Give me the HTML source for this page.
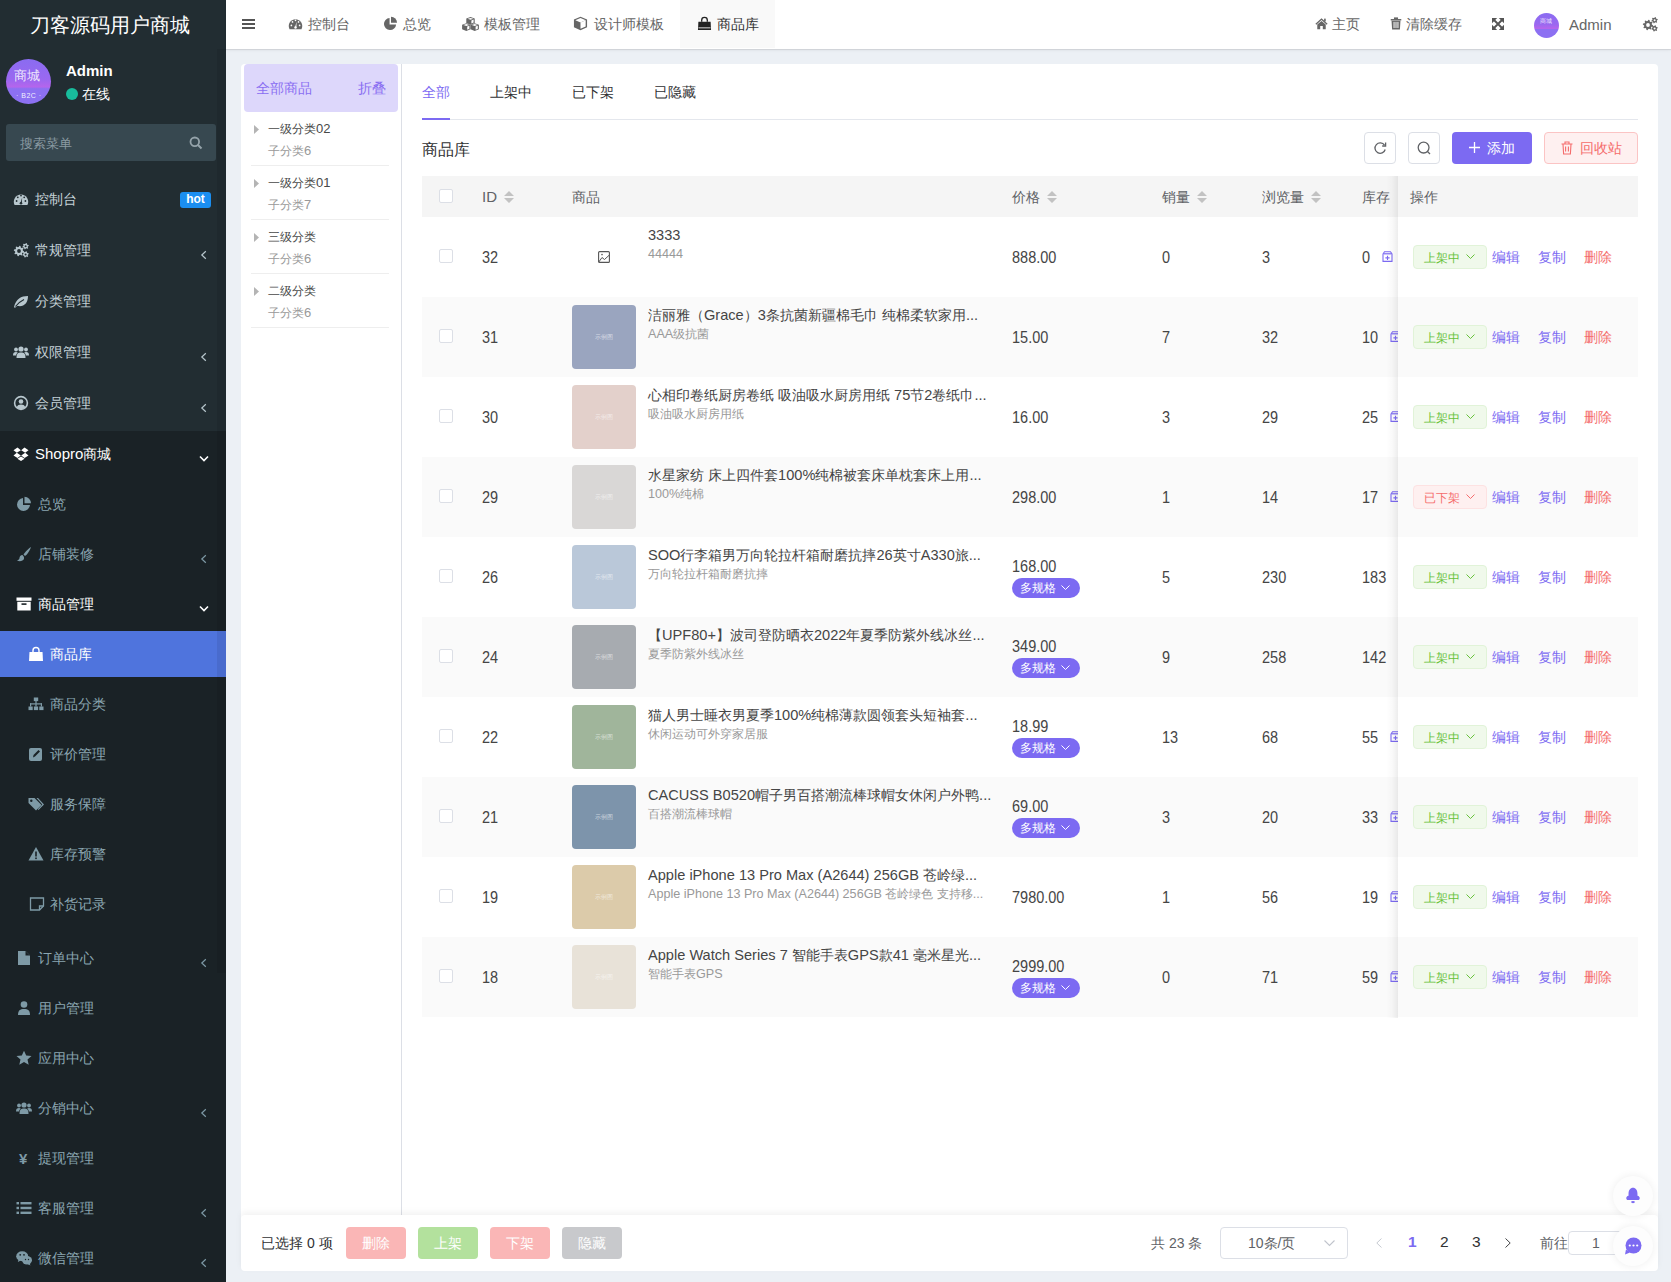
<!DOCTYPE html><html><head><meta charset="utf-8"><style>
*{box-sizing:border-box;margin:0;padding:0}
html,body{width:1671px;height:1282px;overflow:hidden}
body{position:relative;background:#ecf0f5;font-family:"Liberation Sans",sans-serif;font-size:14px;color:#333}
.a{position:absolute;white-space:nowrap}
svg{display:block;position:absolute}
#sb{position:absolute;left:0;top:0;width:226px;height:1282px;background:#222d32;overflow:hidden}
#hd{position:absolute;left:226px;top:0;width:1445px;height:49px;background:#fff;box-shadow:0 1px 1px rgba(0,0,0,0.09),0 2px 3px rgba(0,0,0,0.03)}
#card{position:absolute;left:241px;top:64px;width:1417px;height:1180px;background:#fff;border-radius:4px;overflow:hidden}
#bar{position:absolute;left:241px;top:1215px;width:1417px;height:56px;background:#fff;border-radius:4px;box-shadow:0 -3px 6px rgba(0,0,0,0.05)}
</style></head><body>
<div id="sb">
<div class="a" style="left:0px;top:431px;width:226px;height:851px;background:#1a2226;"></div>
<div class="a" style="left:30px;top:13.0px;font-size:20px;line-height:24px;color:#fff;font-weight:normal;">刀客源码用户商城</div>
<div class="a" style="left:6px;top:59px;width:45px;height:45px;border-radius:50%;overflow:hidden;background:linear-gradient(180deg,#8a6cf1 0%,#9a68f0 45%,#b565ec 62%,#8c70f2 66%,#8c70f2 100%)"></div>
<div class="a" style="left:14px;top:66.5px;font-size:13px;line-height:17px;color:rgba(255,255,255,0.85);font-weight:normal;">商城</div>
<div class="a" style="left:16px;top:89.5px;font-size:7px;line-height:11px;color:rgba(255,255,255,0.9);font-weight:normal;letter-spacing:0.5px">· B2C ·</div>
<div class="a" style="left:66px;top:61.0px;font-size:15px;line-height:19px;color:#fff;font-weight:bold;">Admin</div>
<div class="a" style="left:66px;top:88px;width:12px;height:12px;border-radius:50%;background:#18bc9c"></div>
<div class="a" style="left:82px;top:85.0px;font-size:14px;line-height:18px;color:#fff;font-weight:normal;">在线</div>
<div class="a" style="left:6px;top:124px;width:210px;height:37px;background:#374850;border-radius:3px"></div>
<div class="a" style="left:20px;top:134.5px;font-size:13px;line-height:17px;color:#8a9aa2;font-weight:normal;">搜索菜单</div>
<svg style="left:189px;top:136px;" width="14" height="14" viewBox="0 0 14 14"><circle cx="5.8" cy="5.8" r="4.3" stroke="#95a3aa" stroke-width="1.8" fill="none"/><path d="M9 9 L12.5 12.5" stroke="#95a3aa" stroke-width="2"/></svg>
<div class="a" style="left:0px;top:631px;width:226px;height:46px;background:#4f74dd;"></div>
<svg style="left:13px;top:191px;" width="16" height="16" viewBox="0 0 16 16"><path d="M1.6 14 A7.2 7.2 0 1 1 14.4 14 Z" fill="#b8c7ce"/><g fill="#222d32"><circle cx="3.6" cy="10" r="0.9"/><circle cx="4.8" cy="6.3" r="0.9"/><circle cx="8" cy="4.6" r="0.9"/><circle cx="11.2" cy="6.3" r="0.9"/><circle cx="12.4" cy="10" r="0.9"/><path d="M7.3 12.5 L9.2 6.2 L8.8 12.7Z"/><circle cx="8" cy="12.3" r="1.3"/></g></svg>
<div class="a" style="left:35px;top:190.0px;font-size:14px;line-height:18px;color:#c4d1d7;font-weight:normal;">控制台</div>
<svg style="left:13px;top:242px;" width="16" height="16" viewBox="0 0 16 16"><g fill="#b8c7ce"><path d="M6.51 3.83 L7.51 4.02 L7.84 5.56 L8.47 5.99 L10.02 5.70 L10.59 6.55 L9.73 7.87 L9.88 8.62 L11.17 9.51 L10.98 10.51 L9.44 10.84 L9.01 11.47 L9.30 13.02 L8.45 13.59 L7.13 12.73 L6.38 12.88 L5.49 14.17 L4.49 13.98 L4.16 12.44 L3.53 12.01 L1.98 12.30 L1.41 11.45 L2.27 10.13 L2.12 9.38 L0.83 8.49 L1.02 7.49 L2.56 7.16 L2.99 6.53 L2.70 4.98 L3.55 4.41 L4.87 5.27 L5.62 5.12Z"/><path d="M13.02 1.03 L13.82 1.24 L14.00 2.38 L14.42 2.80 L15.56 2.98 L15.77 3.78 L14.88 4.50 L14.72 5.08 L15.14 6.15 L14.55 6.74 L13.48 6.32 L12.90 6.48 L12.18 7.37 L11.38 7.16 L11.20 6.02 L10.78 5.60 L9.64 5.42 L9.43 4.62 L10.32 3.90 L10.48 3.32 L10.06 2.25 L10.65 1.66 L11.72 2.08 L12.30 1.92Z"/><path d="M13.02 9.23 L13.82 9.44 L14.00 10.58 L14.42 11.00 L15.56 11.18 L15.77 11.98 L14.88 12.70 L14.72 13.28 L15.14 14.35 L14.55 14.94 L13.48 14.52 L12.90 14.68 L12.18 15.57 L11.38 15.36 L11.20 14.22 L10.78 13.80 L9.64 13.62 L9.43 12.82 L10.32 12.10 L10.48 11.52 L10.06 10.45 L10.65 9.86 L11.72 10.28 L12.30 10.12Z"/></g><g fill="#222d32"><circle cx="6" cy="9" r="1.9"/><circle cx="12.6" cy="4.2" r="1"/><circle cx="12.6" cy="12.4" r="1"/></g></svg>
<div class="a" style="left:35px;top:241.0px;font-size:14px;line-height:18px;color:#c4d1d7;font-weight:normal;">常规管理</div>
<svg style="left:200px;top:250px;" width="8" height="10" viewBox="0 0 8 10"><path d="M5.8 1.2 L1.8 5 L5.8 8.8" stroke="#b8c7ce" stroke-width="1.2" fill="none"/></svg>
<svg style="left:13px;top:293px;" width="16" height="16" viewBox="0 0 16 16"><path d="M1 14 C3 6 8 3 15 3 C15 10 11 14 5 13 C4 13 3 13.5 2 15 Z" fill="#b8c7ce"/><path d="M2.5 13.5 C5 10 8 8 11 6.5" stroke="#222d32" stroke-width="1.2" fill="none"/></svg>
<div class="a" style="left:35px;top:292.0px;font-size:14px;line-height:18px;color:#c4d1d7;font-weight:normal;">分类管理</div>
<svg style="left:13px;top:344px;" width="16" height="16" viewBox="0 0 16 16"><g fill="#b8c7ce"><circle cx="8" cy="5" r="2.6"/><path d="M3.5 14 C3.5 9.5 5 8.5 8 8.5 C11 8.5 12.5 9.5 12.5 14Z"/><circle cx="3" cy="5.5" r="1.9"/><circle cx="13" cy="5.5" r="1.9"/><path d="M0 11.5 C0 8.8 1 8 3 8 C3.8 8 4.5 8.2 4.8 8.6 C3.6 9.5 3.2 10.5 3.2 11.5Z"/><path d="M16 11.5 C16 8.8 15 8 13 8 C12.2 8 11.5 8.2 11.2 8.6 C12.4 9.5 12.8 10.5 12.8 11.5Z"/></g></svg>
<div class="a" style="left:35px;top:343.0px;font-size:14px;line-height:18px;color:#c4d1d7;font-weight:normal;">权限管理</div>
<svg style="left:200px;top:352px;" width="8" height="10" viewBox="0 0 8 10"><path d="M5.8 1.2 L1.8 5 L5.8 8.8" stroke="#b8c7ce" stroke-width="1.2" fill="none"/></svg>
<svg style="left:13px;top:395px;" width="16" height="16" viewBox="0 0 16 16"><circle cx="8" cy="8" r="7.2" fill="#b8c7ce"/><circle cx="8" cy="8" r="5.6" fill="#222d32"/><circle cx="8" cy="6.5" r="2.3" fill="#b8c7ce"/><path d="M3.6 12.6 C4.5 10.2 6 9.6 8 9.6 C10 9.6 11.5 10.2 12.4 12.6 C11 13.8 9.6 14.2 8 14.2 C6.4 14.2 5 13.8 3.6 12.6Z" fill="#b8c7ce"/></svg>
<div class="a" style="left:35px;top:394.0px;font-size:14px;line-height:18px;color:#c4d1d7;font-weight:normal;">会员管理</div>
<svg style="left:200px;top:403px;" width="8" height="10" viewBox="0 0 8 10"><path d="M5.8 1.2 L1.8 5 L5.8 8.8" stroke="#b8c7ce" stroke-width="1.2" fill="none"/></svg>
<svg style="left:13px;top:446px;" width="16" height="16" viewBox="0 0 16 16"><g fill="#fff"><path d="M4.5 1.5 L0.5 4.2 L3.8 6.8 L7.8 4.3Z"/><path d="M11.5 1.5 L15.5 4.2 L12.2 6.8 L8.2 4.3Z"/><path d="M3.8 6.8 L0.5 9.4 L4.5 12 L7.8 9.5Z"/><path d="M12.2 6.8 L15.5 9.4 L11.5 12 L8.2 9.5Z"/><path d="M4.4 12.8 L8 10.5 L11.6 12.8 L8 15Z"/></g></svg>
<div class="a" style="left:35px;top:445.0px;font-size:14px;line-height:18px;color:#fff;font-weight:normal;"><span style="font-size:15px">Shopro</span>商城</div>
<svg style="left:199px;top:454px;" width="10" height="9" viewBox="0 0 10 9"><path d="M1 2.5 L5 6.5 L9 2.5" stroke="#fff" stroke-width="1.6" fill="none"/></svg>
<svg style="left:16px;top:496px;" width="16" height="16" viewBox="0 0 16 16"><path d="M7 2 A6.5 6.5 0 1 0 14 9 L7 9Z" fill="#7e9aa6"/><path d="M8.5 0.8 A6.5 6.5 0 0 1 15 7.3 L8.5 7.3Z" fill="#7e9aa6"/></svg>
<div class="a" style="left:38px;top:494.5px;font-size:14px;line-height:18px;color:#8ba6b1;font-weight:normal;">总览</div>
<svg style="left:16px;top:546px;" width="16" height="16" viewBox="0 0 16 16"><path d="M15 1 C13 2 9 6 7.5 8.5 L9 10 C11.5 8.5 14 4 15 1Z" fill="#7e9aa6"/><path d="M6.5 9 C4.5 9 3.5 10.5 3.5 12 C3.5 13.2 2.5 14 1 14.5 C3 15.5 6 15.5 7.5 13.8 C8.5 12.6 8.3 10.5 6.5 9Z" fill="#7e9aa6"/></svg>
<div class="a" style="left:38px;top:545.0px;font-size:14px;line-height:18px;color:#8ba6b1;font-weight:normal;">店铺装修</div>
<svg style="left:200px;top:554px;" width="8" height="10" viewBox="0 0 8 10"><path d="M5.8 1.2 L1.8 5 L5.8 8.8" stroke="#7e9aa6" stroke-width="1.2" fill="none"/></svg>
<svg style="left:16px;top:596px;" width="16" height="16" viewBox="0 0 16 16"><rect x="0.5" y="1.5" width="15" height="3.3" fill="#fff"/><rect x="1.3" y="5.8" width="13.4" height="8.7" fill="#fff"/><rect x="5.5" y="7.3" width="5" height="1.6" fill="#1a2226"/></svg>
<div class="a" style="left:38px;top:595.0px;font-size:14px;line-height:18px;color:#fff;font-weight:normal;">商品管理</div>
<svg style="left:199px;top:604px;" width="10" height="9" viewBox="0 0 10 9"><path d="M1 2.5 L5 6.5 L9 2.5" stroke="#fff" stroke-width="1.6" fill="none"/></svg>
<svg style="left:28px;top:646px;" width="16" height="16" viewBox="0 0 16 16"><path d="M5 6 V4.5 A3 3 0 0 1 11 4.5 V6" stroke="#fff" stroke-width="1.4" fill="none"/><path d="M1.5 6 H14.5 L15 15 H1Z" fill="#fff"/></svg>
<div class="a" style="left:50px;top:645.0px;font-size:14px;line-height:18px;color:#fff;font-weight:normal;">商品库</div>
<svg style="left:28px;top:696px;" width="16" height="16" viewBox="0 0 16 16"><g fill="#7e9aa6"><rect x="5.8" y="1.5" width="4.4" height="3.6"/><rect x="0.5" y="10.5" width="4.2" height="3.6"/><rect x="5.9" y="10.5" width="4.2" height="3.6"/><rect x="11.3" y="10.5" width="4.2" height="3.6"/><rect x="7.4" y="5" width="1.2" height="5.6"/><rect x="2" y="7.3" width="12" height="1.2"/><rect x="2" y="7.3" width="1.2" height="3.3"/><rect x="12.8" y="7.3" width="1.2" height="3.3"/></g></svg>
<div class="a" style="left:50px;top:695.0px;font-size:14px;line-height:18px;color:#8ba6b1;font-weight:normal;">商品分类</div>
<svg style="left:28px;top:746px;" width="16" height="16" viewBox="0 0 16 16"><rect x="1" y="2" width="13" height="13" rx="2" fill="#7e9aa6"/><path d="M5 11.5 L5.5 9 L10.5 4 L12 5.5 L7 10.5Z" fill="#1a2226"/></svg>
<div class="a" style="left:50px;top:745.0px;font-size:14px;line-height:18px;color:#8ba6b1;font-weight:normal;">评价管理</div>
<svg style="left:28px;top:796px;" width="16" height="16" viewBox="0 0 16 16"><path d="M0.5 2 H6.5 L13.5 9 L8 14.5 L0.5 7Z" fill="#7e9aa6"/><circle cx="3.3" cy="4.8" r="1.2" fill="#1a2226"/><path d="M8.5 2 H10 L16 8.5 L10.5 14 L9.8 13.3 L14.3 8.5Z" fill="#7e9aa6"/></svg>
<div class="a" style="left:50px;top:795.0px;font-size:14px;line-height:18px;color:#8ba6b1;font-weight:normal;">服务保障</div>
<svg style="left:28px;top:846px;" width="16" height="16" viewBox="0 0 16 16"><path d="M8 1 L15.5 14.5 H0.5Z" fill="#7e9aa6"/><rect x="7.2" y="5.5" width="1.6" height="5" fill="#1a2226"/><rect x="7.2" y="11.5" width="1.6" height="1.6" fill="#1a2226"/></svg>
<div class="a" style="left:50px;top:845.0px;font-size:14px;line-height:18px;color:#8ba6b1;font-weight:normal;">库存预警</div>
<svg style="left:29px;top:896px;" width="16" height="16" viewBox="0 0 16 16"><path d="M1.5 2 H14.5 V10 L10.5 14 H1.5Z" stroke="#7e9aa6" stroke-width="1.3" fill="none"/><path d="M10.5 14 V10 H14.5" stroke="#7e9aa6" stroke-width="1.3" fill="none"/></svg>
<div class="a" style="left:50px;top:895.0px;font-size:14px;line-height:18px;color:#8ba6b1;font-weight:normal;">补货记录</div>
<svg style="left:16px;top:950px;" width="16" height="16" viewBox="0 0 16 16"><path d="M2 1 H9.5 L14 5.5 V15 H2Z" fill="#7e9aa6"/><path d="M9.5 1 V5.5 H14" fill="#1a2226"/></svg>
<div class="a" style="left:38px;top:949.0px;font-size:14px;line-height:18px;color:#8ba6b1;font-weight:normal;">订单中心</div>
<svg style="left:200px;top:958px;" width="8" height="10" viewBox="0 0 8 10"><path d="M5.8 1.2 L1.8 5 L5.8 8.8" stroke="#7e9aa6" stroke-width="1.2" fill="none"/></svg>
<svg style="left:16px;top:1000px;" width="16" height="16" viewBox="0 0 16 16"><circle cx="8" cy="4.5" r="3.3" fill="#7e9aa6"/><path d="M2 15 C2 10.5 4 9 8 9 C12 9 14 10.5 14 15Z" fill="#7e9aa6"/></svg>
<div class="a" style="left:38px;top:999.0px;font-size:14px;line-height:18px;color:#8ba6b1;font-weight:normal;">用户管理</div>
<svg style="left:16px;top:1050px;" width="16" height="16" viewBox="0 0 16 16"><path d="M8 0.8 L10.2 5.6 L15.5 6.1 L11.5 9.6 L12.7 14.8 L8 12.1 L3.3 14.8 L4.5 9.6 L0.5 6.1 L5.8 5.6Z" fill="#7e9aa6"/></svg>
<div class="a" style="left:38px;top:1049.0px;font-size:14px;line-height:18px;color:#8ba6b1;font-weight:normal;">应用中心</div>
<svg style="left:16px;top:1100px;" width="16" height="16" viewBox="0 0 16 16"><g fill="#7e9aa6"><circle cx="8" cy="5" r="2.6"/><path d="M3.5 14 C3.5 9.5 5 8.5 8 8.5 C11 8.5 12.5 9.5 12.5 14Z"/><circle cx="3" cy="5.5" r="1.9"/><circle cx="13" cy="5.5" r="1.9"/><path d="M0 11.5 C0 8.8 1 8 3 8 C3.8 8 4.5 8.2 4.8 8.6 C3.6 9.5 3.2 10.5 3.2 11.5Z"/><path d="M16 11.5 C16 8.8 15 8 13 8 C12.2 8 11.5 8.2 11.2 8.6 C12.4 9.5 12.8 10.5 12.8 11.5Z"/></g></svg>
<div class="a" style="left:38px;top:1099.0px;font-size:14px;line-height:18px;color:#8ba6b1;font-weight:normal;">分销中心</div>
<svg style="left:200px;top:1108px;" width="8" height="10" viewBox="0 0 8 10"><path d="M5.8 1.2 L1.8 5 L5.8 8.8" stroke="#7e9aa6" stroke-width="1.2" fill="none"/></svg>
<div class="a" style="left:19px;top:1148.5px;font-size:15px;line-height:19px;color:#7e9aa6;font-weight:bold;">¥</div>
<div class="a" style="left:38px;top:1149.0px;font-size:14px;line-height:18px;color:#8ba6b1;font-weight:normal;">提现管理</div>
<svg style="left:16px;top:1200px;" width="16" height="16" viewBox="0 0 16 16"><g fill="#7e9aa6"><rect x="0.5" y="2" width="2.5" height="2.4"/><rect x="0.5" y="6.8" width="2.5" height="2.4"/><rect x="0.5" y="11.6" width="2.5" height="2.4"/><rect x="4.5" y="2" width="11" height="2.4"/><rect x="4.5" y="6.8" width="11" height="2.4"/><rect x="4.5" y="11.6" width="11" height="2.4"/></g></svg>
<div class="a" style="left:38px;top:1199.0px;font-size:14px;line-height:18px;color:#8ba6b1;font-weight:normal;">客服管理</div>
<svg style="left:200px;top:1208px;" width="8" height="10" viewBox="0 0 8 10"><path d="M5.8 1.2 L1.8 5 L5.8 8.8" stroke="#7e9aa6" stroke-width="1.2" fill="none"/></svg>
<svg style="left:16px;top:1250px;" width="16" height="16" viewBox="0 0 16 16"><ellipse cx="6.2" cy="6.2" rx="6" ry="5" fill="#7e9aa6"/><path d="M2.5 9.5 L1.8 12 L4.8 10.5Z" fill="#7e9aa6"/><ellipse cx="11" cy="10.3" rx="5" ry="4.2" fill="#7e9aa6"/><path d="M13.5 13.5 L14.5 15.5 L11.8 14.2Z" fill="#7e9aa6"/><g fill="#1a2226"><circle cx="4.2" cy="4.8" r="0.9"/><circle cx="8" cy="4.8" r="0.9"/><circle cx="9.5" cy="9.5" r="0.7"/><circle cx="12.5" cy="9.5" r="0.7"/></g></svg>
<div class="a" style="left:38px;top:1249.0px;font-size:14px;line-height:18px;color:#8ba6b1;font-weight:normal;">微信管理</div>
<svg style="left:200px;top:1258px;" width="8" height="10" viewBox="0 0 8 10"><path d="M5.8 1.2 L1.8 5 L5.8 8.8" stroke="#7e9aa6" stroke-width="1.2" fill="none"/></svg>
<div class="a" style="left:180px;top:192px;width:31px;height:16px;border-radius:3px;background:#1b8ef0;color:#fff;font-size:12px;font-weight:bold;line-height:15px;text-align:center">hot</div>
<div class="a" style="left:217px;top:49px;width:9px;height:924px;background:rgba(0,0,0,0.07);"></div>
</div>
<div id="hd"></div>
<div class="a" style="left:242px;top:19px;width:13px;height:2.2px;background:#555;"></div>
<div class="a" style="left:242px;top:23px;width:13px;height:2.2px;background:#555;"></div>
<div class="a" style="left:242px;top:27px;width:13px;height:2.2px;background:#555;"></div>
<div class="a" style="left:680px;top:0px;width:95px;height:48px;background:#f9f9f9;"></div>
<svg style="left:288px;top:16px;" width="15" height="15" viewBox="0 0 16 16"><path d="M1.6 14 A7.2 7.2 0 1 1 14.4 14 Z" fill="#666"/><g fill="#fff"><circle cx="3.6" cy="10" r="0.9"/><circle cx="4.8" cy="6.3" r="0.9"/><circle cx="8" cy="4.6" r="0.9"/><circle cx="11.2" cy="6.3" r="0.9"/><circle cx="12.4" cy="10" r="0.9"/><path d="M7.3 12.5 L9.2 6.2 L8.8 12.7Z"/><circle cx="8" cy="12.3" r="1.3"/></g></svg>
<div class="a" style="left:308px;top:15.0px;font-size:14px;line-height:18px;color:#666;font-weight:normal;">控制台</div>
<svg style="left:383px;top:16px;" width="15" height="15" viewBox="0 0 16 16"><path d="M7 2 A6.5 6.5 0 1 0 14 9 L7 9Z" fill="#666"/><path d="M8.5 0.8 A6.5 6.5 0 0 1 15 7.3 L8.5 7.3Z" fill="#666"/></svg>
<div class="a" style="left:403px;top:15.0px;font-size:14px;line-height:18px;color:#666;font-weight:normal;">总览</div>
<svg style="left:462px;top:17px;" width="17" height="14" viewBox="0 0 17 14"><path d="M4.3 1.6 L8.5 0 L12.7 1.6 V6.1 L8.5 7.7 L4.3 6.1Z" fill="#666"/><path d="M5.6 1.7 L8.5 0.9 L11.4 1.7 L8.5 2.7Z" fill="#fff"/><path d="M9.4 3.4 L11.6 2.5 V5.5 L9.4 6.5Z" fill="#fff"/><path d="M0.09999999999999964 7.800000000000001 L4.3 6.2 L8.5 7.800000000000001 V12.3 L4.3 13.9 L0.09999999999999964 12.3Z" fill="#666"/><path d="M1.4 7.9 L4.3 7.1000000000000005 L7.199999999999999 7.9 L4.3 8.9Z" fill="#fff"/><path d="M5.2 9.6 L7.4 8.7 V11.7 L5.2 12.7Z" fill="#fff"/><path d="M8.5 7.800000000000001 L12.7 6.2 L16.9 7.800000000000001 V12.3 L12.7 13.9 L8.5 12.3Z" fill="#666"/><path d="M9.799999999999999 7.9 L12.7 7.1000000000000005 L15.6 7.9 L12.7 8.9Z" fill="#fff"/><path d="M13.6 9.6 L15.799999999999999 8.7 V11.7 L13.6 12.7Z" fill="#fff"/></svg>
<div class="a" style="left:484px;top:15.0px;font-size:14px;line-height:18px;color:#666;font-weight:normal;">模板管理</div>
<svg style="left:573px;top:16px;" width="15" height="15" viewBox="0 0 16 16"><path d="M8 0.8 L15 3.8 V12 L8 15.2 L1 12 V3.8Z" fill="#666"/><path d="M8 6.8 L13.5 4.5 V11.2 L8 13.6Z" fill="#fff"/><path d="M2.5 4.5 L8 2.2 L13.5 4.5 L8 6.8Z" fill="#fff"/></svg>
<div class="a" style="left:594px;top:15.0px;font-size:14px;line-height:18px;color:#666;font-weight:normal;">设计师模板</div>
<svg style="left:697px;top:16px;" width="15" height="15" viewBox="0 0 16 16"><path d="M5 6 V4.5 A3 3 0 0 1 11 4.5 V6" stroke="#222" stroke-width="1.4" fill="none"/><path d="M1.5 6 H14.5 L15 15 H1Z" fill="#222"/><rect x="1.6" y="12.2" width="12.8" height="0.9" fill="#f9f9f9"/></svg>
<div class="a" style="left:717px;top:15.0px;font-size:14px;line-height:18px;color:#333;font-weight:normal;">商品库</div>
<svg style="left:1315px;top:17px;" width="13" height="13" viewBox="0 0 16 16"><path d="M8 1.5 L0.5 8.2 L1.6 9.4 L8 3.8 L14.4 9.4 L15.5 8.2Z" fill="#666"/><path d="M2.8 9.2 L8 4.8 L13.2 9.2 V15 H9.6 V11 H6.4 V15 H2.8Z" fill="#666"/><rect x="11.2" y="2" width="2" height="3.5" fill="#666"/></svg>
<div class="a" style="left:1332px;top:15.0px;font-size:14px;line-height:18px;color:#666;font-weight:normal;">主页</div>
<svg style="left:1390px;top:17px;" width="12" height="13" viewBox="0 0 14 16"><g fill="#666"><rect x="0.5" y="2.5" width="13" height="1.8"/><rect x="4.5" y="0.5" width="5" height="2.5"/><path d="M1.5 4.5 H12.5 L11.8 15.5 H2.2Z"/></g><g fill="#fff"><rect x="4" y="6" width="1.2" height="7.5"/><rect x="6.4" y="6" width="1.2" height="7.5"/><rect x="8.8" y="6" width="1.2" height="7.5"/></g></svg>
<div class="a" style="left:1406px;top:15.0px;font-size:14px;line-height:18px;color:#666;font-weight:normal;">清除缓存</div>
<svg style="left:1492px;top:18px;" width="12" height="12" viewBox="0 0 12 12"><g fill="#555"><path d="M0 0 H5.2 L0 5.2Z"/><path d="M12 0 H6.8 L12 5.2Z"/><path d="M0 12 H5.2 L0 6.8Z"/><path d="M12 12 H6.8 L12 6.8Z"/></g><path d="M1.5 1.5 L10.5 10.5 M10.5 1.5 L1.5 10.5" stroke="#555" stroke-width="1.9"/></svg>
<div class="a" style="left:1534px;top:13px;width:25px;height:25px;border-radius:50%;overflow:hidden;background:linear-gradient(180deg,#8a6cf1 0%,#9a68f0 45%,#b565ec 62%,#8c70f2 66%,#8c70f2 100%)"></div>
<div class="a" style="left:1540px;top:16.0px;font-size:6px;line-height:10px;color:rgba(255,255,255,0.8);font-weight:normal;">商城</div>
<div class="a" style="left:1569px;top:14.5px;font-size:15px;line-height:19px;color:#666;font-weight:normal;">Admin</div>
<svg style="left:1642px;top:16px;" width="16" height="16" viewBox="0 0 16 16"><g fill="#666"><path d="M6.51 3.83 L7.51 4.02 L7.84 5.56 L8.47 5.99 L10.02 5.70 L10.59 6.55 L9.73 7.87 L9.88 8.62 L11.17 9.51 L10.98 10.51 L9.44 10.84 L9.01 11.47 L9.30 13.02 L8.45 13.59 L7.13 12.73 L6.38 12.88 L5.49 14.17 L4.49 13.98 L4.16 12.44 L3.53 12.01 L1.98 12.30 L1.41 11.45 L2.27 10.13 L2.12 9.38 L0.83 8.49 L1.02 7.49 L2.56 7.16 L2.99 6.53 L2.70 4.98 L3.55 4.41 L4.87 5.27 L5.62 5.12Z"/><path d="M13.02 1.03 L13.82 1.24 L14.00 2.38 L14.42 2.80 L15.56 2.98 L15.77 3.78 L14.88 4.50 L14.72 5.08 L15.14 6.15 L14.55 6.74 L13.48 6.32 L12.90 6.48 L12.18 7.37 L11.38 7.16 L11.20 6.02 L10.78 5.60 L9.64 5.42 L9.43 4.62 L10.32 3.90 L10.48 3.32 L10.06 2.25 L10.65 1.66 L11.72 2.08 L12.30 1.92Z"/><path d="M13.02 9.23 L13.82 9.44 L14.00 10.58 L14.42 11.00 L15.56 11.18 L15.77 11.98 L14.88 12.70 L14.72 13.28 L15.14 14.35 L14.55 14.94 L13.48 14.52 L12.90 14.68 L12.18 15.57 L11.38 15.36 L11.20 14.22 L10.78 13.80 L9.64 13.62 L9.43 12.82 L10.32 12.10 L10.48 11.52 L10.06 10.45 L10.65 9.86 L11.72 10.28 L12.30 10.12Z"/></g><g fill="#fff"><circle cx="6" cy="9" r="1.9"/><circle cx="12.6" cy="4.2" r="1"/><circle cx="12.6" cy="12.4" r="1"/></g></svg>
<div id="card"></div>
<div class="a" style="left:401px;top:64px;width:1px;height:1151px;background:#dcdfe6;"></div>
<div class="a" style="left:244px;top:64px;width:154px;height:48px;background:#ddd7fb;border-radius:4px"></div>
<div class="a" style="left:256px;top:79.0px;font-size:14px;line-height:18px;color:#8a6ff2;font-weight:normal;">全部商品</div>
<div class="a" style="left:358px;top:79.0px;font-size:14px;line-height:18px;color:#8a6ff2;font-weight:normal;">折叠</div>
<svg style="left:254px;top:125px;" width="5" height="9" viewBox="0 0 5 9"><path d="M0 0 L5 4.5 L0 9Z" fill="#b4b4b4"/></svg>
<div class="a" style="left:268px;top:121.0px;font-size:12px;line-height:16px;color:#484848;font-weight:normal;">一级分类<span style="font-size:13px">02</span></div>
<div class="a" style="left:268px;top:143.0px;font-size:12px;line-height:16px;color:#999;font-weight:normal;">子分类<span style="font-size:13px">6</span></div>
<div class="a" style="left:251px;top:165px;width:138px;height:1px;background:#eeeeee;"></div>
<svg style="left:254px;top:179px;" width="5" height="9" viewBox="0 0 5 9"><path d="M0 0 L5 4.5 L0 9Z" fill="#b4b4b4"/></svg>
<div class="a" style="left:268px;top:175.0px;font-size:12px;line-height:16px;color:#484848;font-weight:normal;">一级分类<span style="font-size:13px">01</span></div>
<div class="a" style="left:268px;top:197.0px;font-size:12px;line-height:16px;color:#999;font-weight:normal;">子分类<span style="font-size:13px">7</span></div>
<div class="a" style="left:251px;top:219px;width:138px;height:1px;background:#eeeeee;"></div>
<svg style="left:254px;top:233px;" width="5" height="9" viewBox="0 0 5 9"><path d="M0 0 L5 4.5 L0 9Z" fill="#b4b4b4"/></svg>
<div class="a" style="left:268px;top:229.0px;font-size:12px;line-height:16px;color:#484848;font-weight:normal;">三级分类</div>
<div class="a" style="left:268px;top:251.0px;font-size:12px;line-height:16px;color:#999;font-weight:normal;">子分类<span style="font-size:13px">6</span></div>
<div class="a" style="left:251px;top:273px;width:138px;height:1px;background:#eeeeee;"></div>
<svg style="left:254px;top:287px;" width="5" height="9" viewBox="0 0 5 9"><path d="M0 0 L5 4.5 L0 9Z" fill="#b4b4b4"/></svg>
<div class="a" style="left:268px;top:283.0px;font-size:12px;line-height:16px;color:#484848;font-weight:normal;">二级分类</div>
<div class="a" style="left:268px;top:305.0px;font-size:12px;line-height:16px;color:#999;font-weight:normal;">子分类<span style="font-size:13px">6</span></div>
<div class="a" style="left:251px;top:327px;width:138px;height:1px;background:#eeeeee;"></div>
<div class="a" style="left:422px;top:119px;width:1216px;height:1px;background:#e4e7ed;"></div>
<div class="a" style="left:422px;top:118px;width:28px;height:2px;background:#7c6af2;"></div>
<div class="a" style="left:422px;top:83.0px;font-size:14px;line-height:18px;color:#7c6af2;font-weight:normal;">全部</div>
<div class="a" style="left:490px;top:83.0px;font-size:14px;line-height:18px;color:#303133;font-weight:normal;">上架中</div>
<div class="a" style="left:572px;top:83.0px;font-size:14px;line-height:18px;color:#303133;font-weight:normal;">已下架</div>
<div class="a" style="left:654px;top:83.0px;font-size:14px;line-height:18px;color:#303133;font-weight:normal;">已隐藏</div>
<div class="a" style="left:422px;top:140.0px;font-size:16px;line-height:20px;color:#303133;font-weight:normal;">商品库</div>
<div class="a" style="left:1364px;top:132px;width:32px;height:32px;border:1px solid #dcdfe6;border-radius:4px;background:#fff"></div>
<svg style="left:1373px;top:141px;" width="14" height="14" viewBox="0 0 14 14"><path d="M11.5 4.2 A5.2 5.2 0 1 0 12.2 8.5" stroke="#606266" stroke-width="1.3" fill="none"/><path d="M12.6 1.6 V5 H9.2" stroke="#606266" stroke-width="1.3" fill="none"/></svg>
<div class="a" style="left:1408px;top:132px;width:32px;height:32px;border:1px solid #dcdfe6;border-radius:4px;background:#fff"></div>
<svg style="left:1417px;top:141px;" width="14" height="14" viewBox="0 0 14 14"><circle cx="6.6" cy="6.6" r="5.4" stroke="#606266" stroke-width="1.3" fill="none"/><path d="M10.5 10.5 L13 13" stroke="#606266" stroke-width="1.3"/></svg>
<div class="a" style="left:1452px;top:132px;width:80px;height:32px;border-radius:4px;background:#7c6af2"></div>
<svg style="left:1469px;top:142px;" width="11" height="11" viewBox="0 0 11 11"><path d="M5.5 0 V11 M0 5.5 H11" stroke="#fff" stroke-width="1.3"/></svg>
<div class="a" style="left:1487px;top:139.0px;font-size:14px;line-height:18px;color:#fff;font-weight:normal;">添加</div>
<div class="a" style="left:1544px;top:132px;width:94px;height:32px;border:1px solid #fbc4c4;border-radius:4px;background:#fef0f0"></div>
<svg style="left:1561px;top:141px;" width="12" height="14" viewBox="0 0 12 14"><path d="M0.5 3 H11.5 M4 3 V1 H8 V3 M2 3 L2.6 13 H9.4 L10 3 M4.6 5.5 V10.5 M7.4 5.5 V10.5" stroke="#f56c6c" stroke-width="1.1" fill="none"/></svg>
<div class="a" style="left:1580px;top:139.0px;font-size:14px;line-height:18px;color:#f56c6c;font-weight:normal;">回收站</div>
<div class="a" style="left:422px;top:176px;width:1216px;height:41px;background:#f5f5f5;"></div>
<div class="a" style="left:439px;top:189px;width:14px;height:14px;border:1px solid #dcdfe6;border-radius:2px;background:#fff"></div>
<div class="a" style="left:482px;top:186.5px;font-size:15px;line-height:19px;color:#606266;font-weight:normal;">ID</div>
<svg style="left:504px;top:191px;" width="10" height="12" viewBox="0 0 10 12"><path d="M5 0 L10 5 H0Z M5 12 L10 7 H0Z" fill="#c2c2c2"/></svg>
<div class="a" style="left:572px;top:188.0px;font-size:14px;line-height:18px;color:#606266;font-weight:normal;">商品</div>
<div class="a" style="left:1012px;top:188.0px;font-size:14px;line-height:18px;color:#606266;font-weight:normal;">价格</div>
<svg style="left:1047px;top:191px;" width="10" height="12" viewBox="0 0 10 12"><path d="M5 0 L10 5 H0Z M5 12 L10 7 H0Z" fill="#c2c2c2"/></svg>
<div class="a" style="left:1162px;top:188.0px;font-size:14px;line-height:18px;color:#606266;font-weight:normal;">销量</div>
<svg style="left:1197px;top:191px;" width="10" height="12" viewBox="0 0 10 12"><path d="M5 0 L10 5 H0Z M5 12 L10 7 H0Z" fill="#c2c2c2"/></svg>
<div class="a" style="left:1262px;top:188.0px;font-size:14px;line-height:18px;color:#606266;font-weight:normal;">浏览量</div>
<svg style="left:1311px;top:191px;" width="10" height="12" viewBox="0 0 10 12"><path d="M5 0 L10 5 H0Z M5 12 L10 7 H0Z" fill="#c2c2c2"/></svg>
<div class="a" style="left:1362px;top:188.0px;font-size:14px;line-height:18px;color:#606266;font-weight:normal;">库存</div>
<div class="a" style="left:1410px;top:188.0px;font-size:14px;line-height:18px;color:#606266;font-weight:normal;">操作</div>
<div class="a" style="left:439px;top:249px;width:14px;height:14px;border:1px solid #dcdfe6;border-radius:2px;background:#fff"></div>
<div class="a" style="left:482px;top:249.25px;font-size:14.5px;line-height:18.5px;color:#454545;font-weight:normal;transform:scaleY(1.1);transform-origin:0 50%">32</div>
<svg style="left:598px;top:251px;" width="12" height="12" viewBox="0 0 12 12"><rect x="0.6" y="0.6" width="10.8" height="10.8" rx="1" stroke="#555" stroke-width="1.1" fill="none"/><circle cx="4" cy="3.6" r="0.8" fill="#555"/><path d="M0.8 11 L4 6.5 L6.5 8.5 L11.4 4" stroke="#555" stroke-width="1" fill="none"/></svg>
<div class="a" style="left:648px;top:226.0px;font-size:14px;line-height:18px;color:#454545;font-weight:normal;"><span style="font-size:14.6px">3333</span></div>
<div class="a" style="left:648px;top:246.0px;font-size:12px;line-height:16px;color:#999;font-weight:normal;"><span style="font-size:12.6px">44444</span></div>
<div class="a" style="left:1012px;top:249.25px;font-size:14.5px;line-height:18.5px;color:#454545;font-weight:normal;transform:scaleY(1.1);transform-origin:0 50%">888.00</div>
<div class="a" style="left:1162px;top:249.25px;font-size:14.5px;line-height:18.5px;color:#454545;font-weight:normal;transform:scaleY(1.1);transform-origin:0 50%">0</div>
<div class="a" style="left:1262px;top:249.25px;font-size:14.5px;line-height:18.5px;color:#454545;font-weight:normal;transform:scaleY(1.1);transform-origin:0 50%">3</div>
<div class="a" style="left:1362px;top:249.25px;font-size:14.5px;line-height:18.5px;color:#454545;font-weight:normal;transform:scaleY(1.1);transform-origin:0 50%">0</div>
<svg style="left:1382px;top:251px;" width="11" height="11" viewBox="0 0 11 11"><path d="M1 3 L2.5 0.8 H8.5 L10 3 V10.4 H1Z" stroke="#7c6af2" stroke-width="1.1" fill="none"/><path d="M1.5 2.8 H9.5" stroke="#7c6af2" stroke-width="1.2"/><path d="M5.5 4.8 V9 M3.4 6.9 H7.6" stroke="#7c6af2" stroke-width="1.1"/></svg>
<div class="a" style="left:422px;top:297px;width:1216px;height:80px;background:#fafafa;"></div>
<div class="a" style="left:439px;top:329px;width:14px;height:14px;border:1px solid #dcdfe6;border-radius:2px;background:#fff"></div>
<div class="a" style="left:482px;top:329.25px;font-size:14.5px;line-height:18.5px;color:#454545;font-weight:normal;transform:scaleY(1.1);transform-origin:0 50%">31</div>
<div class="a" style="left:572px;top:305px;width:64px;height:64px;border-radius:4px;background:#9aa5bf"></div>
<div class="a" style="left:595px;top:332.0px;font-size:6px;line-height:10px;color:rgba(255,255,255,0.6);font-weight:normal;">示例图</div>
<div class="a" style="left:648px;top:306.0px;font-size:14px;line-height:18px;color:#454545;font-weight:normal;">洁丽雅（<span style="font-size:14.6px">Grace</span>）<span style="font-size:14.6px">3</span>条抗菌新疆棉毛巾<span style="font-size:14.6px"> </span>纯棉柔软家用<span style="font-size:14.6px">...</span></div>
<div class="a" style="left:648px;top:326.0px;font-size:12px;line-height:16px;color:#999;font-weight:normal;"><span style="font-size:12.6px">AAA</span>级抗菌</div>
<div class="a" style="left:1012px;top:329.25px;font-size:14.5px;line-height:18.5px;color:#454545;font-weight:normal;transform:scaleY(1.1);transform-origin:0 50%">15.00</div>
<div class="a" style="left:1162px;top:329.25px;font-size:14.5px;line-height:18.5px;color:#454545;font-weight:normal;transform:scaleY(1.1);transform-origin:0 50%">7</div>
<div class="a" style="left:1262px;top:329.25px;font-size:14.5px;line-height:18.5px;color:#454545;font-weight:normal;transform:scaleY(1.1);transform-origin:0 50%">32</div>
<div class="a" style="left:1362px;top:329.25px;font-size:14.5px;line-height:18.5px;color:#454545;font-weight:normal;transform:scaleY(1.1);transform-origin:0 50%">10</div>
<svg style="left:1390px;top:331px;" width="11" height="11" viewBox="0 0 11 11"><path d="M1 3 L2.5 0.8 H8.5 L10 3 V10.4 H1Z" stroke="#7c6af2" stroke-width="1.1" fill="none"/><path d="M1.5 2.8 H9.5" stroke="#7c6af2" stroke-width="1.2"/><path d="M5.5 4.8 V9 M3.4 6.9 H7.6" stroke="#7c6af2" stroke-width="1.1"/></svg>
<div class="a" style="left:439px;top:409px;width:14px;height:14px;border:1px solid #dcdfe6;border-radius:2px;background:#fff"></div>
<div class="a" style="left:482px;top:409.25px;font-size:14.5px;line-height:18.5px;color:#454545;font-weight:normal;transform:scaleY(1.1);transform-origin:0 50%">30</div>
<div class="a" style="left:572px;top:385px;width:64px;height:64px;border-radius:4px;background:#e3d0cb"></div>
<div class="a" style="left:595px;top:412.0px;font-size:6px;line-height:10px;color:rgba(255,255,255,0.6);font-weight:normal;">示例图</div>
<div class="a" style="left:648px;top:386.0px;font-size:14px;line-height:18px;color:#454545;font-weight:normal;">心相印卷纸厨房卷纸<span style="font-size:14.6px"> </span>吸油吸水厨房用纸<span style="font-size:14.6px"> 75</span>节<span style="font-size:14.6px">2</span>卷纸巾<span style="font-size:14.6px">...</span></div>
<div class="a" style="left:648px;top:406.0px;font-size:12px;line-height:16px;color:#999;font-weight:normal;">吸油吸水厨房用纸</div>
<div class="a" style="left:1012px;top:409.25px;font-size:14.5px;line-height:18.5px;color:#454545;font-weight:normal;transform:scaleY(1.1);transform-origin:0 50%">16.00</div>
<div class="a" style="left:1162px;top:409.25px;font-size:14.5px;line-height:18.5px;color:#454545;font-weight:normal;transform:scaleY(1.1);transform-origin:0 50%">3</div>
<div class="a" style="left:1262px;top:409.25px;font-size:14.5px;line-height:18.5px;color:#454545;font-weight:normal;transform:scaleY(1.1);transform-origin:0 50%">29</div>
<div class="a" style="left:1362px;top:409.25px;font-size:14.5px;line-height:18.5px;color:#454545;font-weight:normal;transform:scaleY(1.1);transform-origin:0 50%">25</div>
<svg style="left:1390px;top:411px;" width="11" height="11" viewBox="0 0 11 11"><path d="M1 3 L2.5 0.8 H8.5 L10 3 V10.4 H1Z" stroke="#7c6af2" stroke-width="1.1" fill="none"/><path d="M1.5 2.8 H9.5" stroke="#7c6af2" stroke-width="1.2"/><path d="M5.5 4.8 V9 M3.4 6.9 H7.6" stroke="#7c6af2" stroke-width="1.1"/></svg>
<div class="a" style="left:422px;top:457px;width:1216px;height:80px;background:#fafafa;"></div>
<div class="a" style="left:439px;top:489px;width:14px;height:14px;border:1px solid #dcdfe6;border-radius:2px;background:#fff"></div>
<div class="a" style="left:482px;top:489.25px;font-size:14.5px;line-height:18.5px;color:#454545;font-weight:normal;transform:scaleY(1.1);transform-origin:0 50%">29</div>
<div class="a" style="left:572px;top:465px;width:64px;height:64px;border-radius:4px;background:#d9d7d6"></div>
<div class="a" style="left:595px;top:492.0px;font-size:6px;line-height:10px;color:rgba(255,255,255,0.6);font-weight:normal;">示例图</div>
<div class="a" style="left:648px;top:466.0px;font-size:14px;line-height:18px;color:#454545;font-weight:normal;">水星家纺<span style="font-size:14.6px"> </span>床上四件套<span style="font-size:14.6px">100%</span>纯棉被套床单枕套床上用<span style="font-size:14.6px">...</span></div>
<div class="a" style="left:648px;top:486.0px;font-size:12px;line-height:16px;color:#999;font-weight:normal;"><span style="font-size:12.6px">100%</span>纯棉</div>
<div class="a" style="left:1012px;top:489.25px;font-size:14.5px;line-height:18.5px;color:#454545;font-weight:normal;transform:scaleY(1.1);transform-origin:0 50%">298.00</div>
<div class="a" style="left:1162px;top:489.25px;font-size:14.5px;line-height:18.5px;color:#454545;font-weight:normal;transform:scaleY(1.1);transform-origin:0 50%">1</div>
<div class="a" style="left:1262px;top:489.25px;font-size:14.5px;line-height:18.5px;color:#454545;font-weight:normal;transform:scaleY(1.1);transform-origin:0 50%">14</div>
<div class="a" style="left:1362px;top:489.25px;font-size:14.5px;line-height:18.5px;color:#454545;font-weight:normal;transform:scaleY(1.1);transform-origin:0 50%">17</div>
<svg style="left:1390px;top:491px;" width="11" height="11" viewBox="0 0 11 11"><path d="M1 3 L2.5 0.8 H8.5 L10 3 V10.4 H1Z" stroke="#7c6af2" stroke-width="1.1" fill="none"/><path d="M1.5 2.8 H9.5" stroke="#7c6af2" stroke-width="1.2"/><path d="M5.5 4.8 V9 M3.4 6.9 H7.6" stroke="#7c6af2" stroke-width="1.1"/></svg>
<div class="a" style="left:439px;top:569px;width:14px;height:14px;border:1px solid #dcdfe6;border-radius:2px;background:#fff"></div>
<div class="a" style="left:482px;top:569.25px;font-size:14.5px;line-height:18.5px;color:#454545;font-weight:normal;transform:scaleY(1.1);transform-origin:0 50%">26</div>
<div class="a" style="left:572px;top:545px;width:64px;height:64px;border-radius:4px;background:#bac8d9"></div>
<div class="a" style="left:595px;top:572.0px;font-size:6px;line-height:10px;color:rgba(255,255,255,0.6);font-weight:normal;">示例图</div>
<div class="a" style="left:648px;top:546.0px;font-size:14px;line-height:18px;color:#454545;font-weight:normal;"><span style="font-size:14.6px">SOO</span>行李箱男万向轮拉杆箱耐磨抗摔<span style="font-size:14.6px">26</span>英寸<span style="font-size:14.6px">A330</span>旅<span style="font-size:14.6px">...</span></div>
<div class="a" style="left:648px;top:566.0px;font-size:12px;line-height:16px;color:#999;font-weight:normal;">万向轮拉杆箱耐磨抗摔</div>
<div class="a" style="left:1012px;top:558.25px;font-size:14.5px;line-height:18.5px;color:#454545;font-weight:normal;transform:scaleY(1.1);transform-origin:0 50%">168.00</div>
<div class="a" style="left:1012px;top:578px;width:68px;height:20px;border-radius:10px;background:#7c6af2"></div>
<div class="a" style="left:1020px;top:580.0px;font-size:12px;line-height:16px;color:#fff;font-weight:normal;">多规格</div>
<svg style="left:1061px;top:585px;" width="9" height="6" viewBox="0 0 9 6"><path d="M0.5 0.5 L4.5 4.5 L8.5 0.5" stroke="#fff" stroke-width="1" fill="none"/></svg>
<div class="a" style="left:1162px;top:569.25px;font-size:14.5px;line-height:18.5px;color:#454545;font-weight:normal;transform:scaleY(1.1);transform-origin:0 50%">5</div>
<div class="a" style="left:1262px;top:569.25px;font-size:14.5px;line-height:18.5px;color:#454545;font-weight:normal;transform:scaleY(1.1);transform-origin:0 50%">230</div>
<div class="a" style="left:1362px;top:569.25px;font-size:14.5px;line-height:18.5px;color:#454545;font-weight:normal;transform:scaleY(1.1);transform-origin:0 50%">183</div>
<svg style="left:1398px;top:571px;" width="11" height="11" viewBox="0 0 11 11"><path d="M1 3 L2.5 0.8 H8.5 L10 3 V10.4 H1Z" stroke="#7c6af2" stroke-width="1.1" fill="none"/><path d="M1.5 2.8 H9.5" stroke="#7c6af2" stroke-width="1.2"/><path d="M5.5 4.8 V9 M3.4 6.9 H7.6" stroke="#7c6af2" stroke-width="1.1"/></svg>
<div class="a" style="left:422px;top:617px;width:1216px;height:80px;background:#fafafa;"></div>
<div class="a" style="left:439px;top:649px;width:14px;height:14px;border:1px solid #dcdfe6;border-radius:2px;background:#fff"></div>
<div class="a" style="left:482px;top:649.25px;font-size:14.5px;line-height:18.5px;color:#454545;font-weight:normal;transform:scaleY(1.1);transform-origin:0 50%">24</div>
<div class="a" style="left:572px;top:625px;width:64px;height:64px;border-radius:4px;background:#a7abb0"></div>
<div class="a" style="left:595px;top:652.0px;font-size:6px;line-height:10px;color:rgba(255,255,255,0.6);font-weight:normal;">示例图</div>
<div class="a" style="left:648px;top:626.0px;font-size:14px;line-height:18px;color:#454545;font-weight:normal;">【<span style="font-size:14.6px">UPF80+</span>】波司登防晒衣<span style="font-size:14.6px">2022</span>年夏季防紫外线冰丝<span style="font-size:14.6px">...</span></div>
<div class="a" style="left:648px;top:646.0px;font-size:12px;line-height:16px;color:#999;font-weight:normal;">夏季防紫外线冰丝</div>
<div class="a" style="left:1012px;top:638.25px;font-size:14.5px;line-height:18.5px;color:#454545;font-weight:normal;transform:scaleY(1.1);transform-origin:0 50%">349.00</div>
<div class="a" style="left:1012px;top:658px;width:68px;height:20px;border-radius:10px;background:#7c6af2"></div>
<div class="a" style="left:1020px;top:660.0px;font-size:12px;line-height:16px;color:#fff;font-weight:normal;">多规格</div>
<svg style="left:1061px;top:665px;" width="9" height="6" viewBox="0 0 9 6"><path d="M0.5 0.5 L4.5 4.5 L8.5 0.5" stroke="#fff" stroke-width="1" fill="none"/></svg>
<div class="a" style="left:1162px;top:649.25px;font-size:14.5px;line-height:18.5px;color:#454545;font-weight:normal;transform:scaleY(1.1);transform-origin:0 50%">9</div>
<div class="a" style="left:1262px;top:649.25px;font-size:14.5px;line-height:18.5px;color:#454545;font-weight:normal;transform:scaleY(1.1);transform-origin:0 50%">258</div>
<div class="a" style="left:1362px;top:649.25px;font-size:14.5px;line-height:18.5px;color:#454545;font-weight:normal;transform:scaleY(1.1);transform-origin:0 50%">142</div>
<svg style="left:1398px;top:651px;" width="11" height="11" viewBox="0 0 11 11"><path d="M1 3 L2.5 0.8 H8.5 L10 3 V10.4 H1Z" stroke="#7c6af2" stroke-width="1.1" fill="none"/><path d="M1.5 2.8 H9.5" stroke="#7c6af2" stroke-width="1.2"/><path d="M5.5 4.8 V9 M3.4 6.9 H7.6" stroke="#7c6af2" stroke-width="1.1"/></svg>
<div class="a" style="left:439px;top:729px;width:14px;height:14px;border:1px solid #dcdfe6;border-radius:2px;background:#fff"></div>
<div class="a" style="left:482px;top:729.25px;font-size:14.5px;line-height:18.5px;color:#454545;font-weight:normal;transform:scaleY(1.1);transform-origin:0 50%">22</div>
<div class="a" style="left:572px;top:705px;width:64px;height:64px;border-radius:4px;background:#a0b59b"></div>
<div class="a" style="left:595px;top:732.0px;font-size:6px;line-height:10px;color:rgba(255,255,255,0.6);font-weight:normal;">示例图</div>
<div class="a" style="left:648px;top:706.0px;font-size:14px;line-height:18px;color:#454545;font-weight:normal;">猫人男士睡衣男夏季<span style="font-size:14.6px">100%</span>纯棉薄款圆领套头短袖套<span style="font-size:14.6px">...</span></div>
<div class="a" style="left:648px;top:726.0px;font-size:12px;line-height:16px;color:#999;font-weight:normal;">休闲运动可外穿家居服</div>
<div class="a" style="left:1012px;top:718.25px;font-size:14.5px;line-height:18.5px;color:#454545;font-weight:normal;transform:scaleY(1.1);transform-origin:0 50%">18.99</div>
<div class="a" style="left:1012px;top:738px;width:68px;height:20px;border-radius:10px;background:#7c6af2"></div>
<div class="a" style="left:1020px;top:740.0px;font-size:12px;line-height:16px;color:#fff;font-weight:normal;">多规格</div>
<svg style="left:1061px;top:745px;" width="9" height="6" viewBox="0 0 9 6"><path d="M0.5 0.5 L4.5 4.5 L8.5 0.5" stroke="#fff" stroke-width="1" fill="none"/></svg>
<div class="a" style="left:1162px;top:729.25px;font-size:14.5px;line-height:18.5px;color:#454545;font-weight:normal;transform:scaleY(1.1);transform-origin:0 50%">13</div>
<div class="a" style="left:1262px;top:729.25px;font-size:14.5px;line-height:18.5px;color:#454545;font-weight:normal;transform:scaleY(1.1);transform-origin:0 50%">68</div>
<div class="a" style="left:1362px;top:729.25px;font-size:14.5px;line-height:18.5px;color:#454545;font-weight:normal;transform:scaleY(1.1);transform-origin:0 50%">55</div>
<svg style="left:1390px;top:731px;" width="11" height="11" viewBox="0 0 11 11"><path d="M1 3 L2.5 0.8 H8.5 L10 3 V10.4 H1Z" stroke="#7c6af2" stroke-width="1.1" fill="none"/><path d="M1.5 2.8 H9.5" stroke="#7c6af2" stroke-width="1.2"/><path d="M5.5 4.8 V9 M3.4 6.9 H7.6" stroke="#7c6af2" stroke-width="1.1"/></svg>
<div class="a" style="left:422px;top:777px;width:1216px;height:80px;background:#fafafa;"></div>
<div class="a" style="left:439px;top:809px;width:14px;height:14px;border:1px solid #dcdfe6;border-radius:2px;background:#fff"></div>
<div class="a" style="left:482px;top:809.25px;font-size:14.5px;line-height:18.5px;color:#454545;font-weight:normal;transform:scaleY(1.1);transform-origin:0 50%">21</div>
<div class="a" style="left:572px;top:785px;width:64px;height:64px;border-radius:4px;background:#7d94ab"></div>
<div class="a" style="left:595px;top:812.0px;font-size:6px;line-height:10px;color:rgba(255,255,255,0.6);font-weight:normal;">示例图</div>
<div class="a" style="left:648px;top:786.0px;font-size:14px;line-height:18px;color:#454545;font-weight:normal;"><span style="font-size:14.6px">CACUSS B0520</span>帽子男百搭潮流棒球帽女休闲户外鸭<span style="font-size:14.6px">...</span></div>
<div class="a" style="left:648px;top:806.0px;font-size:12px;line-height:16px;color:#999;font-weight:normal;">百搭潮流棒球帽</div>
<div class="a" style="left:1012px;top:798.25px;font-size:14.5px;line-height:18.5px;color:#454545;font-weight:normal;transform:scaleY(1.1);transform-origin:0 50%">69.00</div>
<div class="a" style="left:1012px;top:818px;width:68px;height:20px;border-radius:10px;background:#7c6af2"></div>
<div class="a" style="left:1020px;top:820.0px;font-size:12px;line-height:16px;color:#fff;font-weight:normal;">多规格</div>
<svg style="left:1061px;top:825px;" width="9" height="6" viewBox="0 0 9 6"><path d="M0.5 0.5 L4.5 4.5 L8.5 0.5" stroke="#fff" stroke-width="1" fill="none"/></svg>
<div class="a" style="left:1162px;top:809.25px;font-size:14.5px;line-height:18.5px;color:#454545;font-weight:normal;transform:scaleY(1.1);transform-origin:0 50%">3</div>
<div class="a" style="left:1262px;top:809.25px;font-size:14.5px;line-height:18.5px;color:#454545;font-weight:normal;transform:scaleY(1.1);transform-origin:0 50%">20</div>
<div class="a" style="left:1362px;top:809.25px;font-size:14.5px;line-height:18.5px;color:#454545;font-weight:normal;transform:scaleY(1.1);transform-origin:0 50%">33</div>
<svg style="left:1390px;top:811px;" width="11" height="11" viewBox="0 0 11 11"><path d="M1 3 L2.5 0.8 H8.5 L10 3 V10.4 H1Z" stroke="#7c6af2" stroke-width="1.1" fill="none"/><path d="M1.5 2.8 H9.5" stroke="#7c6af2" stroke-width="1.2"/><path d="M5.5 4.8 V9 M3.4 6.9 H7.6" stroke="#7c6af2" stroke-width="1.1"/></svg>
<div class="a" style="left:439px;top:889px;width:14px;height:14px;border:1px solid #dcdfe6;border-radius:2px;background:#fff"></div>
<div class="a" style="left:482px;top:889.25px;font-size:14.5px;line-height:18.5px;color:#454545;font-weight:normal;transform:scaleY(1.1);transform-origin:0 50%">19</div>
<div class="a" style="left:572px;top:865px;width:64px;height:64px;border-radius:4px;background:#dccbaa"></div>
<div class="a" style="left:595px;top:892.0px;font-size:6px;line-height:10px;color:rgba(255,255,255,0.6);font-weight:normal;">示例图</div>
<div class="a" style="left:648px;top:866.0px;font-size:14px;line-height:18px;color:#454545;font-weight:normal;"><span style="font-size:14.6px">Apple iPhone 13 Pro Max (A2644) 256GB </span>苍岭绿<span style="font-size:14.6px">...</span></div>
<div class="a" style="left:648px;top:886.0px;font-size:12px;line-height:16px;color:#999;font-weight:normal;"><span style="font-size:12.6px">Apple iPhone 13 Pro Max (A2644) 256GB </span>苍岭绿色<span style="font-size:12.6px"> </span>支持移<span style="font-size:12.6px">...</span></div>
<div class="a" style="left:1012px;top:889.25px;font-size:14.5px;line-height:18.5px;color:#454545;font-weight:normal;transform:scaleY(1.1);transform-origin:0 50%">7980.00</div>
<div class="a" style="left:1162px;top:889.25px;font-size:14.5px;line-height:18.5px;color:#454545;font-weight:normal;transform:scaleY(1.1);transform-origin:0 50%">1</div>
<div class="a" style="left:1262px;top:889.25px;font-size:14.5px;line-height:18.5px;color:#454545;font-weight:normal;transform:scaleY(1.1);transform-origin:0 50%">56</div>
<div class="a" style="left:1362px;top:889.25px;font-size:14.5px;line-height:18.5px;color:#454545;font-weight:normal;transform:scaleY(1.1);transform-origin:0 50%">19</div>
<svg style="left:1390px;top:891px;" width="11" height="11" viewBox="0 0 11 11"><path d="M1 3 L2.5 0.8 H8.5 L10 3 V10.4 H1Z" stroke="#7c6af2" stroke-width="1.1" fill="none"/><path d="M1.5 2.8 H9.5" stroke="#7c6af2" stroke-width="1.2"/><path d="M5.5 4.8 V9 M3.4 6.9 H7.6" stroke="#7c6af2" stroke-width="1.1"/></svg>
<div class="a" style="left:422px;top:937px;width:1216px;height:80px;background:#fafafa;"></div>
<div class="a" style="left:439px;top:969px;width:14px;height:14px;border:1px solid #dcdfe6;border-radius:2px;background:#fff"></div>
<div class="a" style="left:482px;top:969.25px;font-size:14.5px;line-height:18.5px;color:#454545;font-weight:normal;transform:scaleY(1.1);transform-origin:0 50%">18</div>
<div class="a" style="left:572px;top:945px;width:64px;height:64px;border-radius:4px;background:#e8e2d8"></div>
<div class="a" style="left:595px;top:972.0px;font-size:6px;line-height:10px;color:rgba(255,255,255,0.6);font-weight:normal;">示例图</div>
<div class="a" style="left:648px;top:946.0px;font-size:14px;line-height:18px;color:#454545;font-weight:normal;"><span style="font-size:14.6px">Apple Watch Series 7 </span>智能手表<span style="font-size:14.6px">GPS</span>款<span style="font-size:14.6px">41 </span>毫米星光<span style="font-size:14.6px">...</span></div>
<div class="a" style="left:648px;top:966.0px;font-size:12px;line-height:16px;color:#999;font-weight:normal;">智能手表<span style="font-size:12.6px">GPS</span></div>
<div class="a" style="left:1012px;top:958.25px;font-size:14.5px;line-height:18.5px;color:#454545;font-weight:normal;transform:scaleY(1.1);transform-origin:0 50%">2999.00</div>
<div class="a" style="left:1012px;top:978px;width:68px;height:20px;border-radius:10px;background:#7c6af2"></div>
<div class="a" style="left:1020px;top:980.0px;font-size:12px;line-height:16px;color:#fff;font-weight:normal;">多规格</div>
<svg style="left:1061px;top:985px;" width="9" height="6" viewBox="0 0 9 6"><path d="M0.5 0.5 L4.5 4.5 L8.5 0.5" stroke="#fff" stroke-width="1" fill="none"/></svg>
<div class="a" style="left:1162px;top:969.25px;font-size:14.5px;line-height:18.5px;color:#454545;font-weight:normal;transform:scaleY(1.1);transform-origin:0 50%">0</div>
<div class="a" style="left:1262px;top:969.25px;font-size:14.5px;line-height:18.5px;color:#454545;font-weight:normal;transform:scaleY(1.1);transform-origin:0 50%">71</div>
<div class="a" style="left:1362px;top:969.25px;font-size:14.5px;line-height:18.5px;color:#454545;font-weight:normal;transform:scaleY(1.1);transform-origin:0 50%">59</div>
<svg style="left:1390px;top:971px;" width="11" height="11" viewBox="0 0 11 11"><path d="M1 3 L2.5 0.8 H8.5 L10 3 V10.4 H1Z" stroke="#7c6af2" stroke-width="1.1" fill="none"/><path d="M1.5 2.8 H9.5" stroke="#7c6af2" stroke-width="1.2"/><path d="M5.5 4.8 V9 M3.4 6.9 H7.6" stroke="#7c6af2" stroke-width="1.1"/></svg>
<div class="a" style="left:1386px;top:176px;width:12px;height:842px;background:linear-gradient(90deg,rgba(0,0,0,0) 0%,rgba(0,0,0,0.02) 50%,rgba(0,0,0,0.07) 100%)"></div>
<div class="a" style="left:1398px;top:176px;width:240px;height:841px;background:#fff;"></div>
<div class="a" style="left:1398px;top:176px;width:240px;height:41px;background:#f5f5f5;"></div>
<div class="a" style="left:1410px;top:188.0px;font-size:14px;line-height:18px;color:#606266;font-weight:normal;">操作</div>
<div class="a" style="left:1413px;top:245px;width:74px;height:24px;border:1px solid #e1f3d8;border-radius:4px;background:#f0f9eb"></div>
<div class="a" style="left:1424px;top:250.0px;font-size:12px;line-height:16px;color:#67c23a;font-weight:normal;">上架中</div>
<svg style="left:1466px;top:254px;" width="9" height="6" viewBox="0 0 9 6"><path d="M0.5 0.5 L4.5 4.5 L8.5 0.5" stroke="#67c23a" stroke-width="1" fill="none"/></svg>
<div class="a" style="left:1492px;top:248.0px;font-size:14px;line-height:18px;color:#7c6af2;font-weight:normal;">编辑</div>
<div class="a" style="left:1538px;top:248.0px;font-size:14px;line-height:18px;color:#7c6af2;font-weight:normal;">复制</div>
<div class="a" style="left:1584px;top:248.0px;font-size:14px;line-height:18px;color:#f56c6c;font-weight:normal;">删除</div>
<div class="a" style="left:1398px;top:297px;width:240px;height:80px;background:#fafafa;"></div>
<div class="a" style="left:1413px;top:325px;width:74px;height:24px;border:1px solid #e1f3d8;border-radius:4px;background:#f0f9eb"></div>
<div class="a" style="left:1424px;top:330.0px;font-size:12px;line-height:16px;color:#67c23a;font-weight:normal;">上架中</div>
<svg style="left:1466px;top:334px;" width="9" height="6" viewBox="0 0 9 6"><path d="M0.5 0.5 L4.5 4.5 L8.5 0.5" stroke="#67c23a" stroke-width="1" fill="none"/></svg>
<div class="a" style="left:1492px;top:328.0px;font-size:14px;line-height:18px;color:#7c6af2;font-weight:normal;">编辑</div>
<div class="a" style="left:1538px;top:328.0px;font-size:14px;line-height:18px;color:#7c6af2;font-weight:normal;">复制</div>
<div class="a" style="left:1584px;top:328.0px;font-size:14px;line-height:18px;color:#f56c6c;font-weight:normal;">删除</div>
<div class="a" style="left:1413px;top:405px;width:74px;height:24px;border:1px solid #e1f3d8;border-radius:4px;background:#f0f9eb"></div>
<div class="a" style="left:1424px;top:410.0px;font-size:12px;line-height:16px;color:#67c23a;font-weight:normal;">上架中</div>
<svg style="left:1466px;top:414px;" width="9" height="6" viewBox="0 0 9 6"><path d="M0.5 0.5 L4.5 4.5 L8.5 0.5" stroke="#67c23a" stroke-width="1" fill="none"/></svg>
<div class="a" style="left:1492px;top:408.0px;font-size:14px;line-height:18px;color:#7c6af2;font-weight:normal;">编辑</div>
<div class="a" style="left:1538px;top:408.0px;font-size:14px;line-height:18px;color:#7c6af2;font-weight:normal;">复制</div>
<div class="a" style="left:1584px;top:408.0px;font-size:14px;line-height:18px;color:#f56c6c;font-weight:normal;">删除</div>
<div class="a" style="left:1398px;top:457px;width:240px;height:80px;background:#fafafa;"></div>
<div class="a" style="left:1413px;top:485px;width:74px;height:24px;border:1px solid #fde2e2;border-radius:4px;background:#fef0f0"></div>
<div class="a" style="left:1424px;top:490.0px;font-size:12px;line-height:16px;color:#f56c6c;font-weight:normal;">已下架</div>
<svg style="left:1466px;top:494px;" width="9" height="6" viewBox="0 0 9 6"><path d="M0.5 0.5 L4.5 4.5 L8.5 0.5" stroke="#f56c6c" stroke-width="1" fill="none"/></svg>
<div class="a" style="left:1492px;top:488.0px;font-size:14px;line-height:18px;color:#7c6af2;font-weight:normal;">编辑</div>
<div class="a" style="left:1538px;top:488.0px;font-size:14px;line-height:18px;color:#7c6af2;font-weight:normal;">复制</div>
<div class="a" style="left:1584px;top:488.0px;font-size:14px;line-height:18px;color:#f56c6c;font-weight:normal;">删除</div>
<div class="a" style="left:1413px;top:565px;width:74px;height:24px;border:1px solid #e1f3d8;border-radius:4px;background:#f0f9eb"></div>
<div class="a" style="left:1424px;top:570.0px;font-size:12px;line-height:16px;color:#67c23a;font-weight:normal;">上架中</div>
<svg style="left:1466px;top:574px;" width="9" height="6" viewBox="0 0 9 6"><path d="M0.5 0.5 L4.5 4.5 L8.5 0.5" stroke="#67c23a" stroke-width="1" fill="none"/></svg>
<div class="a" style="left:1492px;top:568.0px;font-size:14px;line-height:18px;color:#7c6af2;font-weight:normal;">编辑</div>
<div class="a" style="left:1538px;top:568.0px;font-size:14px;line-height:18px;color:#7c6af2;font-weight:normal;">复制</div>
<div class="a" style="left:1584px;top:568.0px;font-size:14px;line-height:18px;color:#f56c6c;font-weight:normal;">删除</div>
<div class="a" style="left:1398px;top:617px;width:240px;height:80px;background:#fafafa;"></div>
<div class="a" style="left:1413px;top:645px;width:74px;height:24px;border:1px solid #e1f3d8;border-radius:4px;background:#f0f9eb"></div>
<div class="a" style="left:1424px;top:650.0px;font-size:12px;line-height:16px;color:#67c23a;font-weight:normal;">上架中</div>
<svg style="left:1466px;top:654px;" width="9" height="6" viewBox="0 0 9 6"><path d="M0.5 0.5 L4.5 4.5 L8.5 0.5" stroke="#67c23a" stroke-width="1" fill="none"/></svg>
<div class="a" style="left:1492px;top:648.0px;font-size:14px;line-height:18px;color:#7c6af2;font-weight:normal;">编辑</div>
<div class="a" style="left:1538px;top:648.0px;font-size:14px;line-height:18px;color:#7c6af2;font-weight:normal;">复制</div>
<div class="a" style="left:1584px;top:648.0px;font-size:14px;line-height:18px;color:#f56c6c;font-weight:normal;">删除</div>
<div class="a" style="left:1413px;top:725px;width:74px;height:24px;border:1px solid #e1f3d8;border-radius:4px;background:#f0f9eb"></div>
<div class="a" style="left:1424px;top:730.0px;font-size:12px;line-height:16px;color:#67c23a;font-weight:normal;">上架中</div>
<svg style="left:1466px;top:734px;" width="9" height="6" viewBox="0 0 9 6"><path d="M0.5 0.5 L4.5 4.5 L8.5 0.5" stroke="#67c23a" stroke-width="1" fill="none"/></svg>
<div class="a" style="left:1492px;top:728.0px;font-size:14px;line-height:18px;color:#7c6af2;font-weight:normal;">编辑</div>
<div class="a" style="left:1538px;top:728.0px;font-size:14px;line-height:18px;color:#7c6af2;font-weight:normal;">复制</div>
<div class="a" style="left:1584px;top:728.0px;font-size:14px;line-height:18px;color:#f56c6c;font-weight:normal;">删除</div>
<div class="a" style="left:1398px;top:777px;width:240px;height:80px;background:#fafafa;"></div>
<div class="a" style="left:1413px;top:805px;width:74px;height:24px;border:1px solid #e1f3d8;border-radius:4px;background:#f0f9eb"></div>
<div class="a" style="left:1424px;top:810.0px;font-size:12px;line-height:16px;color:#67c23a;font-weight:normal;">上架中</div>
<svg style="left:1466px;top:814px;" width="9" height="6" viewBox="0 0 9 6"><path d="M0.5 0.5 L4.5 4.5 L8.5 0.5" stroke="#67c23a" stroke-width="1" fill="none"/></svg>
<div class="a" style="left:1492px;top:808.0px;font-size:14px;line-height:18px;color:#7c6af2;font-weight:normal;">编辑</div>
<div class="a" style="left:1538px;top:808.0px;font-size:14px;line-height:18px;color:#7c6af2;font-weight:normal;">复制</div>
<div class="a" style="left:1584px;top:808.0px;font-size:14px;line-height:18px;color:#f56c6c;font-weight:normal;">删除</div>
<div class="a" style="left:1413px;top:885px;width:74px;height:24px;border:1px solid #e1f3d8;border-radius:4px;background:#f0f9eb"></div>
<div class="a" style="left:1424px;top:890.0px;font-size:12px;line-height:16px;color:#67c23a;font-weight:normal;">上架中</div>
<svg style="left:1466px;top:894px;" width="9" height="6" viewBox="0 0 9 6"><path d="M0.5 0.5 L4.5 4.5 L8.5 0.5" stroke="#67c23a" stroke-width="1" fill="none"/></svg>
<div class="a" style="left:1492px;top:888.0px;font-size:14px;line-height:18px;color:#7c6af2;font-weight:normal;">编辑</div>
<div class="a" style="left:1538px;top:888.0px;font-size:14px;line-height:18px;color:#7c6af2;font-weight:normal;">复制</div>
<div class="a" style="left:1584px;top:888.0px;font-size:14px;line-height:18px;color:#f56c6c;font-weight:normal;">删除</div>
<div class="a" style="left:1398px;top:937px;width:240px;height:80px;background:#fafafa;"></div>
<div class="a" style="left:1413px;top:965px;width:74px;height:24px;border:1px solid #e1f3d8;border-radius:4px;background:#f0f9eb"></div>
<div class="a" style="left:1424px;top:970.0px;font-size:12px;line-height:16px;color:#67c23a;font-weight:normal;">上架中</div>
<svg style="left:1466px;top:974px;" width="9" height="6" viewBox="0 0 9 6"><path d="M0.5 0.5 L4.5 4.5 L8.5 0.5" stroke="#67c23a" stroke-width="1" fill="none"/></svg>
<div class="a" style="left:1492px;top:968.0px;font-size:14px;line-height:18px;color:#7c6af2;font-weight:normal;">编辑</div>
<div class="a" style="left:1538px;top:968.0px;font-size:14px;line-height:18px;color:#7c6af2;font-weight:normal;">复制</div>
<div class="a" style="left:1584px;top:968.0px;font-size:14px;line-height:18px;color:#f56c6c;font-weight:normal;">删除</div>
<div id="bar"></div>
<div class="a" style="left:261px;top:1234.0px;font-size:14px;line-height:18px;color:#303133;font-weight:normal;">已选择 0 项</div>
<div class="a" style="left:346px;top:1227px;width:60px;height:32px;border-radius:4px;background:#fab6b6"></div>
<div class="a" style="left:362px;top:1234.0px;font-size:14px;line-height:18px;color:#fff;font-weight:normal;">删除</div>
<div class="a" style="left:418px;top:1227px;width:60px;height:32px;border-radius:4px;background:#b3e19d"></div>
<div class="a" style="left:434px;top:1234.0px;font-size:14px;line-height:18px;color:#fff;font-weight:normal;">上架</div>
<div class="a" style="left:490px;top:1227px;width:60px;height:32px;border-radius:4px;background:#fab6b6"></div>
<div class="a" style="left:506px;top:1234.0px;font-size:14px;line-height:18px;color:#fff;font-weight:normal;">下架</div>
<div class="a" style="left:562px;top:1227px;width:60px;height:32px;border-radius:4px;background:#c8c9cc"></div>
<div class="a" style="left:578px;top:1234.0px;font-size:14px;line-height:18px;color:#fff;font-weight:normal;">隐藏</div>
<div class="a" style="left:1151px;top:1234.0px;font-size:14px;line-height:18px;color:#606266;font-weight:normal;">共 23 条</div>
<div class="a" style="left:1220px;top:1227px;width:128px;height:32px;border:1px solid #dcdfe6;border-radius:4px;background:#fff"></div>
<div class="a" style="left:1248px;top:1234.0px;font-size:14px;line-height:18px;color:#606266;font-weight:normal;">10条/页</div>
<svg style="left:1324px;top:1240px;" width="11" height="7" viewBox="0 0 11 7"><path d="M0.5 0.5 L5.5 5.5 L10.5 0.5" stroke="#c0c4cc" stroke-width="1.1" fill="none"/></svg>
<svg style="left:1376px;top:1238px;" width="6" height="10" viewBox="0 0 6 10"><path d="M5.5 0.5 L0.8 5 L5.5 9.5" stroke="#c0c4cc" stroke-width="0.9" fill="none"/></svg>
<div class="a" style="left:1408px;top:1232.25px;font-size:15.5px;line-height:19.5px;color:#7c6af2;font-weight:bold;">1</div>
<div class="a" style="left:1440px;top:1232.25px;font-size:15.5px;line-height:19.5px;color:#303133;font-weight:normal;">2</div>
<div class="a" style="left:1472px;top:1232.25px;font-size:15.5px;line-height:19.5px;color:#303133;font-weight:normal;">3</div>
<svg style="left:1505px;top:1238px;" width="6" height="10" viewBox="0 0 6 10"><path d="M0.5 0.5 L5.2 5 L0.5 9.5" stroke="#303133" stroke-width="0.9" fill="none"/></svg>
<div class="a" style="left:1540px;top:1234.0px;font-size:14px;line-height:18px;color:#606266;font-weight:normal;">前往</div>
<div class="a" style="left:1568px;top:1231px;width:60px;height:24px;border:1px solid #dcdfe6;border-radius:4px;background:#fff"></div>
<div class="a" style="left:1592px;top:1234.0px;font-size:14px;line-height:18px;color:#606266;font-weight:normal;">1</div>
<div class="a" style="left:1613px;top:1176px;width:40px;height:40px;border-radius:50%;background:#fdfdfd;box-shadow:0 0 8px rgba(0,0,0,0.07)"></div>
<div class="a" style="left:1613px;top:1226px;width:40px;height:40px;border-radius:50%;background:#fdfdfd;box-shadow:0 0 8px rgba(0,0,0,0.07)"></div>
<svg style="left:1624px;top:1186px;" width="18" height="19" viewBox="0 0 16 17"><path d="M4 7 C4 3.6 5.6 1.5 8 1.5 C10.4 1.5 12 3.6 12 7 V8.8 C13.4 9.1 14 9.9 14 10.9 C14 11.9 13.4 12.6 12.4 12.6 H3.6 C2.6 12.6 2 11.9 2 10.9 C2 9.9 2.6 9.1 4 8.8Z" fill="#7c6af2"/><ellipse cx="8" cy="14.4" rx="1.7" ry="1" fill="#7c6af2"/></svg>
<svg style="left:1624px;top:1237px;" width="18" height="18" viewBox="0 0 18 18"><circle cx="9.5" cy="8.5" r="8" fill="#7c6af2"/><path d="M2 12.5 L1 17.5 L6 15.5Z" fill="#7c6af2"/><circle cx="5.8" cy="8.5" r="1.1" fill="#fff"/><circle cx="9.5" cy="8.5" r="1.1" fill="#fff"/><circle cx="13.2" cy="8.5" r="1.1" fill="#fff"/></svg>
</body></html>
